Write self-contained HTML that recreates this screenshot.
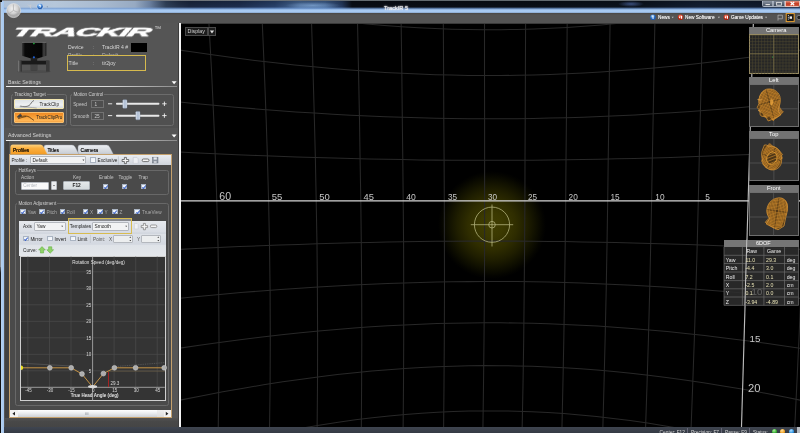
<!DOCTYPE html>
<html><head><meta charset="utf-8"><title>TrackIR 5</title>
<style>
html,body{margin:0;padding:0}
body{width:800px;height:433px;overflow:hidden;background:#555;position:relative;font-family:"Liberation Sans",sans-serif;color:#ddd;font-size:6.5px;line-height:1}
div,span{position:absolute;box-sizing:border-box;white-space:nowrap}
svg{position:absolute;left:0;top:0;overflow:visible}
.t{color:#d8d8d8;font-size:6.4px;line-height:7px}
.dk{color:#222}
.gb{border:1px solid #6c6c6c;border-radius:2.5px}
.gbl{background:#505050;padding:0 1px;color:#d0d0d0;font-size:6.4px;line-height:7px}
.cb{width:5.6px;height:5.6px;background:linear-gradient(135deg,#e8eef6,#ffffff);border:0.6px solid #aab4c2}
.cb.on:after{content:"";position:absolute;left:1.2px;top:0.1px;width:1.4px;height:3px;border:solid #3a62cc;border-width:0 0.75px 0.75px 0;transform:rotate(40deg)}
.combo{background:#f2f3f4;border:0.6px solid #b4b8be;border-radius:1px;color:#222;font-size:6.4px;line-height:7.5px;padding-left:1.5px}
.g{fill:none;stroke:#282828;stroke-width:1.05}
.ax{fill:none;stroke:#d6d6d6;stroke-width:1.3}
.lbl text{fill:#c6c6c6;font-family:"Liberation Sans",sans-serif}
.ph{background:#737373;color:#fff;font-size:7px;line-height:7px;text-align:center}
.pb{background:#303030;border:1px solid #6e6e6e}
.td{color:#e6e0b4;font-size:6.6px;line-height:8px}
.tl{color:#eee;font-size:6.6px;line-height:8px}
</style></head><body><div id="root" style="left:0;top:0;width:800px;height:433px;overflow:hidden;will-change:transform">

<!-- ================= VIEWPORT ================= -->
<div style="left:180px;top:23px;width:620px;height:405px;background:#000;overflow:hidden"></div>
<div style="left:438px;top:171px;width:108px;height:108px;background:radial-gradient(closest-side,rgb(64,62,2) 0%,rgb(59,57,1) 22%,rgb(47,45,0) 45%,rgb(31,30,0) 65%,rgb(14,14,0) 83%,rgb(4,4,0) 94%,rgb(0,0,0) 100%)"></div>
<svg width="800" height="433" viewBox="0 0 800 433" style="clip-path:inset(23px 0 5px 180px)">
<path class="g" d="M811.0 21.0L809.3 70.0L807.5 120.0L806.0 160.0L804.6 201.0L802.9 245.0L801.1 290.0L798.9 340.0L796.8 385.0L794.6 430.0"/>
<path class="g" d="M702.5 21.0L701.4 70.0L700.2 120.0L699.2 160.0L698.3 201.0L697.2 245.0L695.9 290.0L694.3 340.0L692.7 385.0L691.0 430.0"/>
<path class="g" d="M654.9 21.0L654.0 70.0L653.1 120.0L652.3 160.0L651.6 201.0L650.7 245.0L649.7 290.0L648.4 340.0L647.0 385.0L645.5 430.0"/>
<path class="g" d="M610.1 21.0L609.4 70.0L608.8 120.0L608.2 160.0L607.7 201.0L607.0 245.0L606.2 290.0L605.1 340.0L604.0 385.0L602.8 430.0"/>
<path class="g" d="M567.2 21.0L566.8 70.0L566.4 120.0L566.0 160.0L565.7 201.0L565.2 245.0L564.6 290.0L563.8 340.0L562.9 385.0L561.9 430.0"/>
<path class="g" d="M525.6 21.0L525.4 70.0L525.2 120.0L525.0 160.0L524.9 201.0L524.6 245.0L524.2 290.0L523.7 340.0L523.0 385.0L522.1 430.0"/>
<path class="g" d="M484.5 21.0L484.5 70.0L484.6 120.0L484.6 160.0L484.6 201.0L484.6 245.0L484.4 290.0L484.0 340.0L483.5 385.0L482.9 430.0"/>
<path class="g" d="M443.3 21.0L443.6 70.0L443.8 120.0L444.1 160.0L444.3 201.0L444.4 245.0L444.5 290.0L444.3 340.0L444.0 385.0L443.6 430.0"/>
<path class="g" d="M401.1 21.0L401.8 70.0L402.3 120.0L402.8 160.0L403.2 201.0L403.6 245.0L403.7 290.0L403.7 340.0L403.5 385.0L403.1 430.0"/>
<path class="g" d="M357.5 21.0L358.5 70.0L359.5 120.0L360.1 160.0L360.8 201.0L361.3 245.0L361.7 290.0L361.8 340.0L361.6 385.0L361.3 430.0"/>
<path class="g" d="M311.5 21.0L313.0 70.0L314.4 120.0L315.4 160.0L316.2 201.0L317.0 245.0L317.4 290.0L317.6 340.0L317.5 385.0L317.1 430.0"/>
<path class="g" d="M262.2 21.0L264.3 70.0L266.2 120.0L267.5 160.0L268.6 201.0L269.5 245.0L270.1 290.0L270.3 340.0L270.1 385.0L269.5 430.0"/>
<path class="g" d="M208.8 21.0L211.5 70.0L213.8 120.0L215.4 160.0L216.8 201.0L218.0 245.0L218.7 290.0L219.0 340.0L218.8 385.0L218.2 430.0"/>
<path class="g" d="M701.0 486.0L682.3 481.7L664.2 477.8L646.6 474.3L629.3 471.3L612.4 468.6L595.9 466.3L579.5 464.4L563.4 462.7L547.5 461.4L531.7 460.5L516.0 459.8L500.4 459.4L484.8 459.4L469.2 459.7L453.5 460.2L437.7 461.1L421.8 462.3L405.8 463.8L389.6 465.6L373.1 467.8L356.3 470.4L339.2 473.3L321.7 476.6L303.7 480.3L285.2 484.5"/>
<path class="g" d="M855.9 470.4L830.8 463.3L807.0 456.9L784.3 451.0L762.6 445.7L741.8 440.9L721.7 436.5L702.3 432.6L683.5 429.1L665.3 425.9L647.5 423.1L630.1 420.6L613.2 418.4L596.5 416.5L580.0 414.9L563.8 413.6L547.8 412.5L531.9 411.7L516.2 411.2L500.4 410.9L484.7 410.9L469.0 411.1L453.3 411.5L437.4 412.2L421.5 413.2L405.3 414.5L389.0 416.0L372.4 417.8L355.5 419.8L338.3 422.2L320.6 424.9L302.6 428.0L284.0 431.4L264.8 435.2L245.0 439.4L224.4 444.1L203.0 449.2L180.6 454.9L157.2 461.1L132.5 468.0"/>
<path class="g" d="M858.3 412.7L833.1 407.1L809.0 402.0L786.2 397.3L764.3 393.1L743.3 389.3L723.1 385.9L703.5 382.8L684.6 380.0L666.3 377.5L648.4 375.3L630.9 373.3L613.8 371.6L597.0 370.1L580.5 368.8L564.2 367.8L548.1 367.0L532.2 366.3L516.3 365.9L500.5 365.7L484.7 365.6L468.9 365.8L453.1 366.2L437.1 366.7L421.1 367.5L404.9 368.5L388.4 369.7L371.7 371.1L354.8 372.7L337.4 374.6L319.7 376.7L301.5 379.2L282.8 381.8L263.5 384.8L243.5 388.2L222.8 391.8L201.2 395.9L178.6 400.4L155.0 405.3L130.2 410.8"/>
<path class="g" d="M835.2 353.6L811.0 349.8L787.9 346.4L765.9 343.2L744.7 340.4L724.4 337.9L704.7 335.5L685.7 333.5L667.2 331.6L649.2 330.0L631.7 328.5L614.5 327.2L597.6 326.1L581.0 325.2L564.6 324.4L548.4 323.8L532.4 323.3L516.4 323.0L500.5 322.8L484.7 322.8L468.8 322.9L452.9 323.2L436.9 323.6L420.7 324.2L404.4 324.9L387.9 325.8L371.1 326.8L354.1 328.0L336.6 329.4L318.8 331.0L300.5 332.8L281.6 334.8L262.2 337.1L242.1 339.5L221.2 342.3L199.5 345.3L176.7 348.6L152.9 352.3L127.9 356.4"/>
<path class="g" d="M837.3 302.0L812.9 299.5L789.6 297.2L767.4 295.1L746.1 293.2L725.6 291.5L705.8 290.0L686.7 288.6L668.1 287.3L650.0 286.2L632.4 285.3L615.1 284.4L598.1 283.7L581.4 283.1L565.0 282.6L548.7 282.1L532.6 281.8L516.6 281.6L500.6 281.5L484.7 281.5L468.7 281.6L452.7 281.7L436.6 282.0L420.4 282.4L404.0 282.9L387.4 283.5L370.6 284.2L353.4 285.0L335.9 285.9L317.9 287.0L299.5 288.2L280.6 289.5L261.0 291.0L240.8 292.6L219.7 294.4L197.8 296.5L174.9 298.7L150.9 301.1L125.7 303.8"/>
<path class="g" d="M839.3 251.4L814.7 250.1L791.3 248.9L768.9 247.9L747.5 246.9L726.8 246.1L706.9 245.3L687.7 244.6L669.0 244.0L650.8 243.5L633.0 243.0L615.7 242.5L598.6 242.2L581.9 241.9L565.3 241.6L549.0 241.4L532.8 241.2L516.7 241.1L500.6 241.1L484.6 241.1L468.6 241.1L452.5 241.2L436.4 241.3L420.1 241.5L403.6 241.8L386.9 242.1L370.0 242.4L352.7 242.8L335.1 243.3L317.1 243.8L298.5 244.4L279.5 245.1L259.8 245.8L239.4 246.6L218.3 247.6L196.2 248.6L173.2 249.7L149.0 250.9L123.5 252.3"/>
<path class="g" d="M843.3 149.8L818.4 151.1L794.6 152.3L771.9 153.4L750.2 154.4L729.3 155.2L709.1 156.0L689.7 156.7L670.8 157.4L652.4 157.9L634.4 158.4L616.9 158.8L599.7 159.2L582.7 159.5L566.0 159.8L549.5 160.0L533.2 160.2L516.9 160.3L500.7 160.3L484.6 160.3L468.4 160.3L452.2 160.2L435.9 160.1L419.4 159.9L402.8 159.6L386.0 159.3L368.8 159.0L351.4 158.6L333.6 158.1L315.4 157.5L296.6 156.9L277.4 156.3L257.4 155.5L236.8 154.7L215.4 153.7L193.0 152.7L169.6 151.5L145.1 150.3"/>
<path class="g" d="M845.4 97.4L820.2 100.1L796.3 102.5L773.5 104.6L751.6 106.6L730.6 108.4L710.3 110.0L690.7 111.4L671.7 112.7L653.2 113.8L635.1 114.9L617.5 115.7L600.2 116.5L583.2 117.2L566.4 117.7L549.8 118.1L533.4 118.4L517.1 118.7L500.8 118.8L484.6 118.8L468.3 118.7L452.0 118.5L435.6 118.2L419.1 117.8L402.4 117.3L385.5 116.7L368.3 116.0L350.7 115.2L332.8 114.2L314.5 113.1L295.7 111.9L276.3 110.5L256.2 108.9L235.4 107.2L213.9 105.3L191.3 103.2L167.8 100.9L143.0 98.3"/>
<path class="g" d="M847.6 42.7L822.2 46.7L798.1 50.4L775.1 53.8L753.0 56.8L731.9 59.5L711.5 62.0L691.8 64.2L672.6 66.2L654.0 67.9L635.9 69.5L618.1 70.8L600.7 72.0L583.6 73.0L566.8 73.8L550.1 74.5L533.6 75.0L517.2 75.3L500.8 75.5L484.5 75.5L468.2 75.4L451.8 75.1L435.4 74.7L418.7 74.1L402.0 73.3L384.9 72.4L367.6 71.3L350.0 70.0L332.0 68.5L313.6 66.8L294.6 64.9L275.1 62.7L254.9 60.4L234.0 57.7L212.3 54.8L189.6 51.6L165.9 48.0L140.9 44.1"/>
<path class="g" d="M849.9 -15.4L824.3 -9.8L800.0 -4.7L776.8 -0.1L754.6 4.0L733.3 7.8L712.7 11.1L692.9 14.2L673.6 16.9L654.9 19.3L636.7 21.4L618.8 23.3L601.3 24.9L584.1 26.3L567.2 27.4L550.4 28.3L533.8 29.0L517.3 29.4L500.9 29.7L484.5 29.7L468.1 29.6L451.6 29.2L435.1 28.6L418.4 27.7L401.5 26.7L384.4 25.4L367.0 23.9L349.3 22.1L331.2 20.0L312.6 17.7L293.5 15.1L273.9 12.2L253.6 8.9L232.5 5.3L210.6 1.3L187.8 -3.2L163.8 -8.1L138.7 -13.5"/>
<path class="g" d="M674.7 -36.2L655.9 -33.1L637.5 -30.3L619.6 -27.9L602.0 -25.8L584.7 -24.1L567.6 -22.6L550.8 -21.4L534.1 -20.6L517.5 -20.0L501.0 -19.6L484.5 -19.6L468.0 -19.8L451.4 -20.3L434.8 -21.1L418.0 -22.2L401.0 -23.6L383.8 -25.2L366.3 -27.2L348.5 -29.5L330.2 -32.2L311.6 -35.2"/>
<path class="ax" style="stroke:#bcbcbc;stroke-width:1.15" d="M753.4 21L741.4 430"/>
<path class="ax" d="M180 200.9L748.8 200.9"/>
<path class="ax" d="M796 200.9L800 200.9"/>

<g class="lbl">
<text x="219.3" y="199.6" font-size="10.6">60</text>
<text x="271.8" y="199.6" font-size="9.5">55</text>
<text x="319.3" y="199.6" font-size="9.5">50</text>
<text x="363.6" y="199.6" font-size="9.4">45</text>
<text x="406.2" y="199.6" font-size="8.6">40</text>
<text x="447.9" y="199.6" font-size="8.2">35</text>
<text x="487.9" y="199.6" font-size="8.2">30</text>
<text x="527.9" y="199.6" font-size="8.2">25</text>
<text x="568.6" y="199.6" font-size="8.3">20</text>
<text x="610.4" y="199.6" font-size="8.3">15</text>
<text x="655.3" y="199.6" font-size="8.3">10</text>
<text x="705.3" y="199.6" font-size="8.3">5</text>
<text x="751.6" y="295.2" font-size="9.6">10</text>
<text x="749.6" y="342.2" font-size="9.8">15</text>
<text x="748.0" y="392.0" font-size="11.2">20</text>

</g>
<g fill="none" stroke="#b9b984" stroke-width="0.75">
<circle cx="492" cy="224.7" r="17.6"/><circle cx="492" cy="224.7" r="3.3"/>
<path d="M470.8 224.7H513.2M492 204.5V246.5"/>
</g>
</svg>
<!-- display button -->
<div style="left:185px;top:27.4px;width:23px;height:8.8px;background:#1c1c1c;border:0.6px solid #4a4a4a;color:#d4d4d4;font-size:5.3px;line-height:7.6px;padding-left:1.6px">Display</div>
<div style="left:207.6px;top:27.4px;width:8.8px;height:8.8px;background:#1c1c1c;border:0.6px solid #4a4a4a"></div>
<svg width="800" height="433"><path d="M209.9 30.4h4.2l-2.1 3z" fill="#e0e0e0"/></svg>

<!-- ================= TITLE BAR ================= -->
<div style="left:0;top:0;width:800px;height:13px;background:linear-gradient(90deg,#aec0d5 0,#b6c7da 55px,#a9bbd0 100px,#97aac2 135px,#6a7f9e 150px,#33455f 166px,#1f2e4a 190px,#22355a 240px,#2f4b7a 275px,#5379ad 300px,#4a70a6 325px,#2a426c 342px,#0b1019 352px,#0b111a 520px,#0d1622 640px,#16243b 700px,#121d30 800px)"></div>
<div style="left:0;top:1px;width:800px;height:8px;background:linear-gradient(180deg,rgba(0,0,0,0.3),rgba(0,0,0,0.05));-webkit-mask-image:linear-gradient(90deg,transparent 150px,#000 180px);mask-image:linear-gradient(90deg,transparent 150px,#000 180px)"></div>
<div style="left:618px;top:0.5px;width:26px;height:6px;background:radial-gradient(closest-side,rgba(90,120,190,0.6),rgba(90,120,190,0));"></div>
<div style="left:285px;top:1.5px;width:56px;height:7px;background:radial-gradient(closest-side,rgba(150,190,235,0.55),rgba(150,190,235,0));"></div>
<div style="left:0;top:7.4px;width:800px;height:5.6px;background:linear-gradient(180deg,rgba(120,160,215,0) 0,rgba(120,160,215,0.75) 25%,#9fc2ec 45%,#abcdf5 65%,#a3c5ee 85%,#7f9cc0 100%)"></div>
<div style="left:0;top:0;width:800px;height:1.1px;background:linear-gradient(90deg,#8a8e94,#70767c 200px,#626a70 400px,#626a70)"></div>
<div style="left:384px;top:4.6px;font-size:5.6px;line-height:6px;color:#f2f2f2;text-shadow:0 0 1.5px #fff,0 0 2px #ccd">TrackIR 5</div>
<!-- window buttons -->
<div style="left:762.4px;top:0.6px;width:10.6px;height:6px;background:linear-gradient(#8a94a2,#4a5464);border:0.6px solid rgba(200,208,220,0.6);border-top:0;border-radius:0 0 0 2px"></div>
<div style="left:773px;top:0.6px;width:12.4px;height:6px;background:linear-gradient(#7a8494,#3e4858);border:0.6px solid rgba(200,208,220,0.6);border-top:0"></div>
<div style="left:785.4px;top:0.6px;width:14.6px;height:6px;background:linear-gradient(#e0907c,#c43a22 55%,#d0563c);border:0.6px solid #e8c0b8;border-top:0;border-radius:0 0 2px 0"></div>
<svg width="800" height="433"><path d="M765.5 4.6h4.4" stroke="#e4e4e4" stroke-width="1.1"/><rect x="776.6" y="2.4" width="4.8" height="2.8" fill="none" stroke="#e0e0e0" stroke-width="0.9"/><path d="M790.6 2l3.6 3.2m0-3.2l-3.6 3.2" stroke="#fff" stroke-width="1.2"/></svg>

<!-- ================= TOOLBAR ================= -->
<div style="left:4px;top:12.9px;width:796px;height:10.1px;background:linear-gradient(#4a4846,#545454 2px,#545454)"></div>
<div style="left:178px;top:22.5px;width:622px;height:1px;background:#3a3a3a"></div>
<svg width="800" height="433">
<defs><radialGradient id="bl" cx="40%" cy="30%"><stop offset="0" stop-color="#cfe6ff"/><stop offset="0.6" stop-color="#3f86d8"/><stop offset="1" stop-color="#1f5cb0"/></radialGradient>
<radialGradient id="rd" cx="40%" cy="30%"><stop offset="0" stop-color="#ff9a80"/><stop offset="0.6" stop-color="#d83a20"/><stop offset="1" stop-color="#a82410"/></radialGradient></defs>
<circle cx="653" cy="17.3" r="2.8" fill="url(#bl)"/><rect x="652.6" y="15.4" width="0.9" height="3.6" fill="#fff"/>
<circle cx="680.6" cy="17.3" r="2.8" fill="url(#rd)"/><path d="M678.8 17.3l1.4-1.4v2.8zM681 15.8h1.2v3h-1.2z" fill="#fff"/>
<circle cx="726.4" cy="17.3" r="2.8" fill="url(#rd)"/><path d="M724.6 17.3l1.4-1.4v2.8zM726.8 15.8h1.2v3h-1.2z" fill="#fff"/>
<path d="M671.6 16.8h2.2l-1.1 1.4zM717.8 16.8h2.2l-1.1 1.4zM765 16.8h2.2l-1.1 1.4z" fill="#bbb"/>
<path d="M778 15v5.6M778 15.2h4.4v3.6h-4.4" fill="none" stroke="#aaa" stroke-width="0.8"/>
<rect x="786.2" y="13.6" width="8" height="8" fill="#1c1c1c" stroke="#e8a030" stroke-width="1"/>
<path d="M788.4 15v5.4" stroke="#ddd" stroke-width="0.9" stroke-dasharray="1 0.8"/><rect x="789.6" y="16.4" width="2.4" height="2.4" fill="#eee"/>
<circle cx="799" cy="17.5" r="2.2" fill="#222" stroke="#999" stroke-width="0.7"/>
</svg>
<div class="tb" style="left:658px;top:14.6px;font-size:4.75px;line-height:6px;color:#e8e8e8;text-shadow:0 0 0.5px #e8e8e8">News</div>
<div class="tb" style="left:685px;top:14.6px;font-size:4.75px;line-height:6px;color:#e8e8e8;text-shadow:0 0 0.5px #e8e8e8">New Software</div>
<div class="tb" style="left:731px;top:14.6px;font-size:4.75px;line-height:6px;color:#e8e8e8;text-shadow:0 0 0.5px #e8e8e8">Game Updates</div>

<!-- ================= LEFT PANEL ================= -->
<div style="left:4px;top:23px;width:175px;height:404px;background:#555"></div>
<!-- logo -->
<div style="left:15.6px;top:24.5px;font-size:12.3px;line-height:15px;font-weight:bold;font-style:italic;color:#fff;letter-spacing:-0.45px;-webkit-text-stroke:0.6px #fff;transform-origin:0 0;transform:scaleX(2.62) skewX(-8deg);will-change:transform">TRACKIR</div>
<div style="left:154.3px;top:26.4px;font-size:7px;line-height:7px;color:#ccc;margin-top:-1.4px">™</div>
<!-- device picture -->
<svg width="800" height="433">
<defs><linearGradient id="cam" x1="0" x2="1"><stop offset="0" stop-color="#3a3a3a"/><stop offset="0.12" stop-color="#0a0a0a"/><stop offset="0.8" stop-color="#050505"/><stop offset="0.9" stop-color="#444"/><stop offset="1" stop-color="#1a1a1a"/></linearGradient>
<linearGradient id="leg" x1="0" x2="1"><stop offset="0" stop-color="#8a8a8a"/><stop offset="0.3" stop-color="#555"/><stop offset="1" stop-color="#2a2a2a"/></linearGradient></defs>
<ellipse cx="34" cy="71.6" rx="17" ry="1.6" fill="#4c4c4c"/>
<path d="M22 42.6h24.4v13.2l-9 2.6h-6.2l-9.2-2.6z" fill="url(#cam)"/>
<path d="M22 42.4h24.4" stroke="#777" stroke-width="0.7"/>
<rect x="30.8" y="57.6" width="6.4" height="12.6" fill="#1e1e1e"/>
<path d="M19.2 60.8h29.6v3.6h-29.6z" fill="#1a1a1a"/>
<path d="M18.4 60.6h3.4v11h-3.4z" fill="url(#leg)"/><path d="M46 60.6h3.6v11h-3.6z" fill="#3a3a3a"/>
<path d="M31 64.4h6v5.8h-6z" fill="#444"/>
<circle cx="33.9" cy="43.6" r="0.8" fill="#20c040"/><circle cx="33.9" cy="57.3" r="1.1" fill="#2060d0"/>
</svg>
<!-- device info -->
<div class="t" style="left:68px;top:43.7px;font-size:5.1px">Device</div><div class="t" style="left:92.6px;top:43.7px;font-size:5.1px;color:#aaa">:</div><div class="t" style="left:102px;top:43.7px;font-size:5.1px">TrackIR 4 #</div>
<div style="left:131px;top:43px;width:16px;height:9px;background:#000"></div>
<div class="t" style="left:68px;top:51.6px;font-size:5.1px;color:#b8b8b8">Profile</div><div class="t" style="left:92.6px;top:51.6px;font-size:5.1px;color:#999">:</div><div class="t" style="left:102px;top:51.6px;font-size:5.1px;color:#b8b8b8">Default</div>
<div style="left:67px;top:55.2px;width:78.6px;height:16px;background:#555;border:1px solid #d6ba4e"></div>
<div class="t" style="left:68.6px;top:60px;font-size:5.1px">Title</div><div class="t" style="left:92.6px;top:60px;font-size:5.1px;color:#aaa">:</div><div class="t" style="left:102px;top:60px;font-size:5.1px">tir2joy</div>
<!-- Basic settings header -->
<div class="t" style="left:8px;top:78.5px;font-size:5.2px;color:#d4d4d4">Basic Settings</div>
<svg width="800" height="433"><path d="M171.6 81.2h5l-2.5 3z" fill="#fff"/></svg>
<div style="left:6px;top:86px;width:171px;height:1.2px;background:linear-gradient(90deg,#f0f0f0,#d8d8d8 60%,#8a8a8a)"></div>
<div style="left:5px;top:87.2px;width:173px;height:41px;background:#505050"></div>
<!-- Tracking target -->
<div class="gb" style="left:11px;top:94px;width:55.6px;height:31.6px"></div>
<div class="gbl" style="left:13.4px;top:90.6px;font-size:4.6px">Tracking Target</div>
<div style="left:14px;top:98.8px;width:50.4px;height:10.6px;background:linear-gradient(#dfe3e6,#eef0f1 60%,#d8dcdf);border:0.8px solid #f3e6b0;border-radius:1px"></div>
<div style="left:14px;top:111.8px;width:50.4px;height:10.8px;background:linear-gradient(#ee8a24,#f7a038 45%,#ffb656 85%,#f4a040);border:0.8px solid #f8c070;border-radius:1px"></div>
<svg width="800" height="433"><g fill="none" stroke-linecap="round">
<path d="M20.6 106.2c3 0.6 6 0.8 8.4-0.6c2-1.2 2.4-4.2 4.6-5" stroke="#555" stroke-width="0.8"/>
<path d="M20 106.8c4 0.2 11 0.4 16.4 1.2" stroke="#999" stroke-width="0.7"/>
<path d="M17.4 116.6l3-2.6 1.4 1.4-3 2.6z" fill="#444" stroke="#333" stroke-width="0.5"/>
<path d="M20.6 116.8c3-1 6-1.2 8.6 0.2c1.6 0.9 3 2.4 4.4 3.2" stroke="#4a3010" stroke-width="0.8"/>
<path d="M18.6 118.6c2-0.6 4.6-1.6 7-2" stroke="#4a3010" stroke-width="0.7"/>
</g></svg>
<div class="t dk" style="left:39.4px;top:100.6px;font-size:4.7px">TrackClip</div>
<div class="t dk" style="left:36.2px;top:113.8px;font-size:4.55px">TrackClipPro</div>
<!-- Motion control -->
<div class="gb" style="left:70px;top:94px;width:103.6px;height:31.6px"></div>
<div class="gbl" style="left:72.4px;top:90.6px;font-size:4.6px">Motion Control</div>
<div class="t" style="left:73.2px;top:100.8px;font-size:4.7px;color:#c8c8c8">Speed</div>
<div class="t" style="left:73.2px;top:112.6px;font-size:4.7px;color:#c8c8c8">Smooth</div>
<div style="left:91px;top:100px;width:13px;height:8.2px;border:0.7px solid #727272;background:#4e4e4e;color:#ccc;font-size:4.7px;line-height:7px;padding-left:2.4px">1</div>
<div style="left:91px;top:111.8px;width:13px;height:8.2px;border:0.7px solid #727272;background:#4e4e4e;color:#ccc;font-size:4.7px;line-height:7px;padding-left:2.4px">25</div>
<svg width="800" height="433">
<defs><linearGradient id="thumb" x1="0" x2="1"><stop offset="0" stop-color="#e8eef6"/><stop offset="0.5" stop-color="#a8b8d0"/><stop offset="1" stop-color="#dfe6f0"/></linearGradient></defs>
<path d="M108 103.8h4.2M108 115.6h4.2M162.2 103.8h4.4M164.4 101.6v4.4M162.2 115.6h4.4M164.4 113.4v4.4" stroke="#f0f0f0" stroke-width="0.9"/>
<rect x="116" y="102.8" width="43.4" height="1.9" rx="0.8" fill="#e8e8e8"/><rect x="116" y="114.8" width="43.4" height="1.9" rx="0.8" fill="#e8e8e8"/>
<rect x="122.8" y="99.8" width="4.2" height="8.4" rx="0.8" fill="url(#thumb)" stroke="#8898b0" stroke-width="0.4"/>
<rect x="135.8" y="111.4" width="4.2" height="8.4" rx="0.8" fill="url(#thumb)" stroke="#8898b0" stroke-width="0.4"/>
</svg>
<!-- Advanced settings header -->
<div style="left:5px;top:128.2px;width:173px;height:12px;background:#555"></div>
<div class="t" style="left:8px;top:132.2px;font-size:5.2px;color:#d4d4d4">Advanced Settings</div>
<svg width="800" height="433"><path d="M171.6 134.6h5l-2.5 3z" fill="#fff"/></svg>
<div style="left:6px;top:139.8px;width:171px;height:1.2px;background:linear-gradient(90deg,#f0f0f0,#d8d8d8 60%,#8a8a8a)"></div>
<div style="left:5px;top:141px;width:173px;height:286px;background:#555"></div>
<div style="left:5px;top:141px;width:4.4px;height:286px;background:#414141"></div>
<!-- tabs -->
<svg width="800" height="433">
<defs>
<linearGradient id="tabo" x1="0" y1="0" x2="0" y2="1"><stop offset="0" stop-color="#ffd27a"/><stop offset="0.35" stop-color="#fbb040"/><stop offset="1" stop-color="#f39a22"/></linearGradient>
<linearGradient id="tabg" x1="0" y1="0" x2="0" y2="1"><stop offset="0" stop-color="#eceef1"/><stop offset="1" stop-color="#c6cbd2"/></linearGradient>
</defs>
<path d="M78 154.4v-7.4q0-2 2-2h26.5q2.2 0 3.4 2.4l3.6 7z" fill="url(#tabg)" stroke="#9aa0a8" stroke-width="0.4"/>
<path d="M44 154.4v-7.4q0-2 2-2h26q2.2 0 3.4 2.4l3.6 7z" fill="url(#tabg)" stroke="#9aa0a8" stroke-width="0.4"/>
<path d="M10.6 154.6v-7.6q0-2.2 2-2.2h27.6q2.2 0 3.4 2.4l3.8 7.4z" fill="url(#tabo)" stroke="#f8c878" stroke-width="0.4"/>
</svg>
<div class="t dk" style="left:13px;top:147px;font-size:4.9px;color:#1a1004;text-shadow:0 0 0.3px #1a1004">Profiles</div>
<div class="t dk" style="left:47.4px;top:147px;font-size:4.9px;color:#181818;text-shadow:0 0 0.3px #181818">Titles</div>
<div class="t dk" style="left:80.6px;top:147px;font-size:4.9px;color:#181818;text-shadow:0 0 0.3px #181818">Camera</div>
<!-- tab page frame -->
<div style="left:9.4px;top:154.2px;width:162.4px;height:263.6px;border:0.8px solid #c4a06c;background:#4a4a4a"></div>
<!-- profile toolbar -->
<div style="left:10.2px;top:155px;width:160.8px;height:10.4px;background:linear-gradient(#e9ecf0,#dde1e7 50%,#cfd4dc)"></div>
<div class="t dk" style="left:11.4px;top:157px;font-size:4.7px">Profile :</div>
<div class="combo" style="left:30px;top:156px;width:56.4px;height:8.4px;font-size:4.8px;line-height:7px">Default</div>
<div class="cb" style="left:90px;top:157.2px"></div>
<div class="t dk" style="left:97.6px;top:157px;font-size:4.7px">Exclusive</div>
<svg width="800" height="433">
<path d="M82.4 159.6h2l-1 1.3z" fill="#444"/>
<path d="M118.4 156.4v8" stroke="#b4bac4" stroke-width="0.6"/>
<path d="M124.4 157.4h2v2.1h2.3v2h-2.3v2.1h-2v-2.1h-2.3v-2h2.3z" fill="#f4f4f4" stroke="#444" stroke-width="0.7"/>
<path d="M133.2 157.4h3.6l1.4 1.4v4.6h-5z" fill="#eceef2" stroke="#c2c6ce" stroke-width="0.6"/>
<rect x="142.2" y="159" width="6.8" height="2.6" rx="1.2" fill="#f4f4f4" stroke="#444" stroke-width="0.7"/>
<rect x="152.4" y="157.2" width="5.6" height="5.8" fill="#8a929e" stroke="#6a727e" stroke-width="0.5"/><rect x="153.6" y="157.4" width="3.2" height="2.2" fill="#e8eaee"/><rect x="153.8" y="161" width="2.8" height="2" fill="#c8ccd4"/>
</svg>
<!-- HotKeys group -->
<div class="gb" style="left:14.6px;top:169.8px;width:154.8px;height:25.6px;border-color:#686868"></div>
<div class="gbl" style="left:17.4px;top:166.7px;font-size:4.6px;background:#4a4a4a">HotKeys</div>
<div class="t" style="left:21px;top:173.8px;font-size:4.7px;color:#c4c4c4">Action</div>
<div class="t" style="left:73px;top:173.8px;font-size:4.7px;color:#c4c4c4">Key</div>
<div class="t" style="left:99px;top:173.8px;font-size:4.7px;color:#c4c4c4">Enable</div>
<div class="t" style="left:118.4px;top:173.8px;font-size:4.7px;color:#c4c4c4">Toggle</div>
<div class="t" style="left:138.4px;top:173.8px;font-size:4.7px;color:#c4c4c4">Trap</div>
<div class="combo" style="left:20.8px;top:181.6px;width:28.4px;height:8px;font-size:4.6px;line-height:6.6px;color:#b4b8be;background:#fafafa">Center</div>
<div class="combo" style="left:50.6px;top:181.2px;width:6.8px;height:8.8px;background:#eceef0"></div>
<div style="left:63px;top:181px;width:27.2px;height:9.2px;background:linear-gradient(#e4e8ea,#d4dadd);border:0.6px solid #aab0b6;border-radius:1px;color:#222;font-size:4.8px;line-height:8px;text-align:center;font-weight:bold">F12</div>
<svg width="800" height="433"><path d="M53 185h2l-1 1.3z" fill="#555"/></svg>
<div class="cb on" style="left:102.8px;top:183.6px"></div>
<div class="cb on" style="left:121.6px;top:183.6px"></div>
<div class="cb on" style="left:140.6px;top:183.6px"></div>
<!-- Motion adjustment group -->
<div class="gb" style="left:14.6px;top:203.2px;width:154.8px;height:202.6px;border-color:#686868"></div>
<div class="gbl" style="left:17.4px;top:199.8px;font-size:4.6px;background:#4a4a4a">Motion Adjustment</div>
<div class="cb on" style="left:20px;top:208.8px"></div><div class="t" style="left:27.4px;top:208.8px;font-size:4.7px;color:#ababab">Yaw</div>
<div class="cb on" style="left:39px;top:208.8px"></div><div class="t" style="left:46.4px;top:208.8px;font-size:4.7px;color:#ababab">Pitch</div>
<div class="cb on" style="left:59.8px;top:208.8px"></div><div class="t" style="left:66.6px;top:208.8px;font-size:4.7px;color:#ababab">Roll</div>
<div class="cb on" style="left:82.8px;top:208.8px"></div><div class="t" style="left:90px;top:208.8px;font-size:4.7px;color:#ababab">X</div>
<div class="cb on" style="left:97.4px;top:208.8px"></div><div class="t" style="left:104.4px;top:208.8px;font-size:4.7px;color:#ababab">Y</div>
<div class="cb on" style="left:112.2px;top:208.8px"></div><div class="t" style="left:119.4px;top:208.8px;font-size:4.7px;color:#ababab">Z</div>
<div class="cb on" style="left:134.4px;top:208.8px"></div><div class="t" style="left:142px;top:208.8px;font-size:4.7px;color:#ababab">TrueView</div>
<!-- axis toolbar -->
<div style="left:19.2px;top:220.6px;width:147px;height:35px;background:linear-gradient(#e6e9ed 0,#d9dde4 11px,#cdd3db 12.2px,#dde1e7 13.2px,#d3d8e0 23.2px,#dfe3e8 24.4px,#e4e7eb 100%)"></div>
<div class="t dk" style="left:23px;top:223.4px;font-size:4.7px">Axis</div>
<div class="combo" style="left:34px;top:221.8px;width:31.6px;height:9.4px;font-size:4.8px;line-height:8px">Yaw</div>
<div style="left:67.8px;top:218.2px;width:64.6px;height:15.4px;border:1px solid #d8bc50;background:rgba(214,220,230,0.45)"></div>
<div class="t dk" style="left:69.8px;top:223.4px;font-size:4.7px">Templates</div>
<div class="combo" style="left:92px;top:221.8px;width:37.4px;height:9.4px;font-size:4.8px;line-height:8px">Smooth</div>
<svg width="800" height="433">
<path d="M61.2 225.8h2l-1 1.3zM125.2 225.8h2l-1 1.3z" fill="#444"/>
<path d="M134.4 223.4h2.6l1.2 1.2v4.4h-3.8z" fill="#f0f2f5" stroke="#c8ccd4" stroke-width="0.6"/>
<path d="M143.4 223.4h2v2.2h2.2v2h-2.2v2.2h-2v-2.2h-2.2v-2h2.2z" fill="#f4f4f4" stroke="#777" stroke-width="0.7"/>
<rect x="150.4" y="225" width="6.4" height="2.6" rx="1.2" fill="#f4f4f4" stroke="#777" stroke-width="0.7"/>
<path d="M90.4 234.8v8" stroke="#b8bec8" stroke-width="0.6"/>
</svg>
<div class="cb on" style="left:23px;top:235.8px"></div><div class="t dk" style="left:30.4px;top:235.8px;font-size:4.7px">Mirror</div>
<div class="cb" style="left:47px;top:235.8px"></div><div class="t dk" style="left:54.4px;top:235.8px;font-size:4.7px">Invert</div>
<div class="cb" style="left:70px;top:235.8px"></div><div class="t dk" style="left:77.4px;top:235.8px;font-size:4.7px">Limit</div>
<div class="t dk" style="left:93px;top:235.8px;font-size:4.7px;color:#555">Point:</div>
<div class="t dk" style="left:109px;top:235.8px;font-size:4.7px;color:#555">X</div>
<div class="t dk" style="left:137px;top:235.8px;font-size:4.7px;color:#555">Y</div>
<div class="combo" style="left:113px;top:234.6px;width:20.4px;height:8.8px;background:#eceeef"></div>
<div class="combo" style="left:141px;top:234.6px;width:20.4px;height:8.8px;background:#eceeef"></div>
<svg width="800" height="433"><path d="M129.4 237.8h1.8l-0.9-1.2zM129.4 240h1.8l-0.9 1.2zM157.4 237.8h1.8l-0.9-1.2zM157.4 240h1.8l-0.9 1.2z" fill="#333"/>
<path d="M42 246.6l3.4 3.4h-1.8v3h-3.2v-3h-1.8z" fill="#8fd268" stroke="#58a838" stroke-width="0.5"/>
<path d="M50.2 253.2l3.4-3.4h-1.8v-3h-3.2v3h-1.8z" fill="#8fd268" stroke="#58a838" stroke-width="0.5"/></svg>
<div class="t dk" style="left:23px;top:246.8px;font-size:4.7px">Curve:</div>
<div style="left:20.0px;top:255.6px;width:145.8px;height:145.8px;background:#343434;border:0.9px solid #cfcfcf"></div>
<svg width="800" height="433"><g stroke="#4c4c4c" stroke-width="0.7" fill="none"><path d="M27.9 256.6V392.5"/><path d="M49.5 256.6V392.5"/><path d="M71.0 256.6V392.5"/><path d="M114.1 256.6V392.5"/><path d="M135.7 256.6V392.5"/><path d="M157.2 256.6V392.5"/><path d="M21.0 370.8H164.8"/><path d="M21.0 354.3H164.8"/><path d="M21.0 337.8H164.8"/><path d="M21.0 321.3H164.8"/><path d="M21.0 304.8H164.8"/><path d="M21.0 288.3H164.8"/><path d="M21.0 271.8H164.8"/></g><path d="M92.6 256.6V400.4M21.0 387.3H164.8" stroke="#b4b4b4" stroke-width="0.8" fill="none"/><path d="M21 363.2L71.5 366" stroke="#6a6a6a" stroke-width="0.5" fill="none"/><path d="M114.5 366.6L165 362.6" stroke="#777" stroke-width="0.5" stroke-dasharray="1 0.8" fill="none"/><path d="M108.5 371.2H165" stroke="#7a6a4a" stroke-width="0.5" fill="none"/><path d="M21.0 367.8L71.2 367.8L82.0 374.0L92.6 387.0L103.4 373.6L114.4 367.8L165.0 367.8" stroke="#cc9846" stroke-width="0.95" fill="none" stroke-linejoin="round"/><path d="M108.5 372V387" stroke="#c02020" stroke-width="0.8"/><circle cx="49.8" cy="367.8" r="2.4" fill="#adadad" stroke="#cdcdcd" stroke-width="0.6"/><circle cx="71.2" cy="367.8" r="2.4" fill="#adadad" stroke="#cdcdcd" stroke-width="0.6"/><circle cx="82.0" cy="374.0" r="2.4" fill="#adadad" stroke="#cdcdcd" stroke-width="0.6"/><circle cx="103.4" cy="373.6" r="2.4" fill="#adadad" stroke="#cdcdcd" stroke-width="0.6"/><circle cx="114.4" cy="367.8" r="2.4" fill="#adadad" stroke="#cdcdcd" stroke-width="0.6"/><circle cx="135.6" cy="367.8" r="2.4" fill="#adadad" stroke="#cdcdcd" stroke-width="0.6"/><circle cx="164.2" cy="367.8" r="2.4" fill="#adadad" stroke="#cdcdcd" stroke-width="0.6"/><ellipse cx="92.6" cy="386.6" rx="4.6" ry="1.6" fill="#d8d8d8"/><path d="M21 365.6a2.2 2.2 0 0 1 0 4.4z" fill="#e8e020"/></svg>
<div style="top:260.2px;font-size:4.6px;line-height:5px;color:#e0e0e0;left:38.6px;width:120px;text-align:center;">Rotation Speed (deg/deg)</div>
<div style="top:368.8px;font-size:4.5px;line-height:5px;color:#d6d6d6;left:51.2px;width:40px;text-align:right;">5</div>
<div style="top:352.3px;font-size:4.5px;line-height:5px;color:#d6d6d6;left:51.2px;width:40px;text-align:right;">10</div>
<div style="top:335.8px;font-size:4.5px;line-height:5px;color:#d6d6d6;left:51.2px;width:40px;text-align:right;">15</div>
<div style="top:319.3px;font-size:4.5px;line-height:5px;color:#d6d6d6;left:51.2px;width:40px;text-align:right;">20</div>
<div style="top:302.8px;font-size:4.5px;line-height:5px;color:#d6d6d6;left:51.2px;width:40px;text-align:right;">25</div>
<div style="top:286.3px;font-size:4.5px;line-height:5px;color:#d6d6d6;left:51.2px;width:40px;text-align:right;">30</div>
<div style="top:269.8px;font-size:4.5px;line-height:5px;color:#d6d6d6;left:51.2px;width:40px;text-align:right;">35</div>
<div style="top:387.6px;font-size:4.5px;line-height:5px;color:#d6d6d6;left:-31.5px;width:120px;text-align:center;">-45</div>
<div style="top:387.6px;font-size:4.5px;line-height:5px;color:#d6d6d6;left:-9.9px;width:120px;text-align:center;">-30</div>
<div style="top:387.6px;font-size:4.5px;line-height:5px;color:#d6d6d6;left:11.6px;width:120px;text-align:center;">-15</div>
<div style="top:387.6px;font-size:4.5px;line-height:5px;color:#d6d6d6;left:33.2px;width:120px;text-align:center;">0</div>
<div style="top:387.6px;font-size:4.5px;line-height:5px;color:#d6d6d6;left:54.7px;width:120px;text-align:center;">15</div>
<div style="top:387.6px;font-size:4.5px;line-height:5px;color:#d6d6d6;left:76.3px;width:120px;text-align:center;">30</div>
<div style="top:387.6px;font-size:4.5px;line-height:5px;color:#d6d6d6;left:97.8px;width:120px;text-align:center;">45</div>
<div style="top:393.0px;font-size:4.5px;line-height:5px;color:#e4e4e4;font-weight:bold;left:34.6px;width:120px;text-align:center;">True Head Angle (deg)</div>
<div style="top:380.6px;font-size:4.6px;line-height:5px;color:#d8d8d8;left:110.4px;">29.3</div>

<!-- scrollbar -->
<div style="left:10.2px;top:410px;width:160.8px;height:7.4px;background:#f2f2f2"></div>
<div style="left:18px;top:410px;width:138.6px;height:7.4px;background:linear-gradient(#ffffff,#eceef0 45%,#cdd1d6)"></div>
<div style="left:156.6px;top:410px;width:7.4px;height:7.4px;background:linear-gradient(#f0f0f0,#dcdcdc)"></div>
<svg width="800" height="433"><path d="M15 411.8v3.8l-2.6-1.9zM165.8 411.8v3.8l2.6-1.9z" fill="#222"/><path d="M85.6 412.4v2.6M86.8 412.4v2.6M88 412.4v2.6" stroke="#8a9098" stroke-width="0.5"/></svg>
<div style="left:5px;top:418px;width:173px;height:9px;background:linear-gradient(#525252,#484848 40%,#454545)"></div>
<div style="left:178.2px;top:23px;width:0.8px;height:404px;background:#3c3c3c"></div>
<div style="left:179px;top:23px;width:1.9px;height:404px;background:#f4f4f4"></div>


<!-- ================= RIGHT PANELS ================= -->
<div class="ph" style="left:749.0px;top:27.4px;width:49.6px;height:6.8px;font-size:5.8px;line-height:6.8px;padding-left:4.8px">Camera</div>
<div style="left:749.0px;top:34.2px;width:49.6px;height:40.2px;background:#262626;border:0.8px solid #968a62"></div>
<svg width="800" height="433"><g stroke="#4e4830" stroke-width="0.5"><path d="M752.45 35V74"/><path d="M755.50 35V74"/><path d="M758.55 35V74"/><path d="M761.60 35V74"/><path d="M764.65 35V74"/><path d="M767.70 35V74"/><path d="M770.75 35V74"/><path d="M776.85 35V74"/><path d="M779.90 35V74"/><path d="M782.95 35V74"/><path d="M786.00 35V74"/><path d="M789.05 35V74"/><path d="M792.10 35V74"/><path d="M795.15 35V74"/><path d="M749.6 35.50H798"/><path d="M749.6 38.55H798"/><path d="M749.6 41.60H798"/><path d="M749.6 44.65H798"/><path d="M749.6 47.70H798"/><path d="M749.6 50.75H798"/><path d="M749.6 56.85H798"/><path d="M749.6 59.90H798"/><path d="M749.6 62.95H798"/><path d="M749.6 66.00H798"/><path d="M749.6 69.05H798"/><path d="M749.6 72.10H798"/></g><path d="M773.8 35V74M749.6 53.8H798" stroke="#7c7048" stroke-width="0.9"/><circle cx="772.6" cy="57" r="0.5" fill="#30c050"/></svg>
<div class="ph" style="left:749.0px;top:77.0px;width:49.6px;height:6.8px;font-size:5.8px;line-height:6.8px">Left</div>
<div class="pb" style="left:749.0px;top:83.8px;width:49.6px;height:42.8px"></div>
<svg width="800" height="433"><path d="M773.8 84.8V125.6M750.0 108.8H797.6" stroke="#5a5a5a" stroke-width="0.7" fill="none"/></svg>
<div class="ph" style="left:749.0px;top:131.2px;width:49.6px;height:6.8px;font-size:5.8px;line-height:6.8px">Top</div>
<div class="pb" style="left:749.0px;top:138.0px;width:49.6px;height:43.4px"></div>
<svg width="800" height="433"><path d="M773.9 139.0V180.4M750.0 163.0H797.6" stroke="#5a5a5a" stroke-width="0.7" fill="none"/></svg>
<div class="ph" style="left:749.0px;top:185.3px;width:49.6px;height:6.8px;font-size:5.8px;line-height:6.8px">Front</div>
<div class="pb" style="left:749.0px;top:192.2px;width:49.6px;height:44.2px"></div>
<svg width="800" height="433"><path d="M773.6 193.2V235.4M750.0 217.0H797.6" stroke="#5a5a5a" stroke-width="0.7" fill="none"/></svg>
<svg width="800" height="433"><clipPath id="hl"><path d="M766.5 89.2c5.5-1.2 11.5 1.4 13.3 7c1.2 4 0.4 8.6-1.4 11.6c-0.6 2.4 0.8 5.2 2.4 7.2c-3.4 2.4-8.8 4.6-12.6 6l-2.8-4.8c-1.6 0.5-3.4 0.4-4.6-0.5c-1-1-0.7-2.6-0.9-3.8c-0.4-1.1-1-1.6-0.8-2.6c-0.9-0.5-2-1.2-1.8-2c0.3-1.2 1.6-2.6 1.7-4c-0.3-2-0.2-4.2 0.5-6c1.2-3.8 3.8-7 7-8.1z"/></clipPath><path d="M766.5 89.2c5.5-1.2 11.5 1.4 13.3 7c1.2 4 0.4 8.6-1.4 11.6c-0.6 2.4 0.8 5.2 2.4 7.2c-3.4 2.4-8.8 4.6-12.6 6l-2.8-4.8c-1.6 0.5-3.4 0.4-4.6-0.5c-1-1-0.7-2.6-0.9-3.8c-0.4-1.1-1-1.6-0.8-2.6c-0.9-0.5-2-1.2-1.8-2c0.3-1.2 1.6-2.6 1.7-4c-0.3-2-0.2-4.2 0.5-6c1.2-3.8 3.8-7 7-8.1z" fill="#543a18"/><g clip-path="url(#hl)" fill="none" stroke="#d8902e" stroke-width="0.48" transform="rotate(-15 769.5 102)"><ellipse cx="769.5" cy="102" rx="1.5" ry="19.5"/><ellipse cx="769.5" cy="102" rx="18.0" ry="1.5"/><ellipse cx="769.5" cy="102" rx="3.0" ry="19.5"/><ellipse cx="769.5" cy="102" rx="18.0" ry="3.0"/><ellipse cx="769.5" cy="102" rx="4.5" ry="19.5"/><ellipse cx="769.5" cy="102" rx="18.0" ry="4.5"/><ellipse cx="769.5" cy="102" rx="6.0" ry="19.5"/><ellipse cx="769.5" cy="102" rx="18.0" ry="6.0"/><ellipse cx="769.5" cy="102" rx="7.5" ry="19.5"/><ellipse cx="769.5" cy="102" rx="18.0" ry="7.5"/><ellipse cx="769.5" cy="102" rx="9.0" ry="19.5"/><ellipse cx="769.5" cy="102" rx="18.0" ry="9.0"/><ellipse cx="769.5" cy="102" rx="10.5" ry="19.5"/><ellipse cx="769.5" cy="102" rx="18.0" ry="10.5"/><ellipse cx="769.5" cy="102" rx="12.0" ry="19.5"/><ellipse cx="769.5" cy="102" rx="18.0" ry="12.0"/><ellipse cx="769.5" cy="102" rx="13.5" ry="19.5"/><ellipse cx="769.5" cy="102" rx="18.0" ry="13.5"/><ellipse cx="769.5" cy="102" rx="15.0" ry="19.5"/><ellipse cx="769.5" cy="102" rx="18.0" ry="15.0"/><ellipse cx="769.5" cy="102" rx="16.5" ry="19.5"/><ellipse cx="769.5" cy="102" rx="18.0" ry="16.5"/><ellipse cx="769.5" cy="102" rx="18.0" ry="19.5"/><ellipse cx="769.5" cy="102" rx="18.0" ry="18.0"/></g><path d="M766.5 89.2c5.5-1.2 11.5 1.4 13.3 7c1.2 4 0.4 8.6-1.4 11.6c-0.6 2.4 0.8 5.2 2.4 7.2c-3.4 2.4-8.8 4.6-12.6 6l-2.8-4.8c-1.6 0.5-3.4 0.4-4.6-0.5c-1-1-0.7-2.6-0.9-3.8c-0.4-1.1-1-1.6-0.8-2.6c-0.9-0.5-2-1.2-1.8-2c0.3-1.2 1.6-2.6 1.7-4c-0.3-2-0.2-4.2 0.5-6c1.2-3.8 3.8-7 7-8.1z" fill="none" stroke="#e09a36" stroke-width="0.7"/><path d="M770.8 99.5c1.6-0.6 2.8 0.6 2.6 2.4c-0.2 1.8-1.2 3.4-2.4 3.6c-1-0.6-1.2-4.6-0.2-6z" fill="#eaa43c" opacity="0.8"/><path d="M757.5 99.5c1.5 0.5 3 0.6 4.2 0.2M758 110.5c1.5 0.2 2.6 1 3.2 2.2" stroke="#f0b050" stroke-width="0.7" fill="none"/><clipPath id="ht"><path d="M764.4 145C766 144.6 767.5 145.4 768.6 146.2C772.5 145.6 777 147.6 779.6 151C780.8 152.6 782 153.6 782.5 154.6C781.8 155.4 781.2 155.8 781.2 156.6C782.2 160 781.6 164 779.6 166.6C777.4 169.4 773.4 170.6 770 169.6C767.6 168.8 766 167.4 765 165.6C764 165.4 763 164.8 762.6 163.8C763 163 763.2 162.2 762.8 161.4C761.4 157.6 761 152.6 762.8 149C763.4 147.4 764 146 764.4 145Z"/></clipPath><path d="M764.4 145C766 144.6 767.5 145.4 768.6 146.2C772.5 145.6 777 147.6 779.6 151C780.8 152.6 782 153.6 782.5 154.6C781.8 155.4 781.2 155.8 781.2 156.6C782.2 160 781.6 164 779.6 166.6C777.4 169.4 773.4 170.6 770 169.6C767.6 168.8 766 167.4 765 165.6C764 165.4 763 164.8 762.6 163.8C763 163 763.2 162.2 762.8 161.4C761.4 157.6 761 152.6 762.8 149C763.4 147.4 764 146 764.4 145Z" fill="#543a18"/><g clip-path="url(#ht)" fill="none" stroke="#d8902e" stroke-width="0.48" transform="rotate(20 771.8 157.5)"><ellipse cx="771.8" cy="157.5" rx="1.5" ry="18.0"/><ellipse cx="771.8" cy="157.5" rx="15.0" ry="1.5"/><ellipse cx="771.8" cy="157.5" rx="3.0" ry="18.0"/><ellipse cx="771.8" cy="157.5" rx="15.0" ry="3.0"/><ellipse cx="771.8" cy="157.5" rx="4.5" ry="18.0"/><ellipse cx="771.8" cy="157.5" rx="15.0" ry="4.5"/><ellipse cx="771.8" cy="157.5" rx="6.0" ry="18.0"/><ellipse cx="771.8" cy="157.5" rx="15.0" ry="6.0"/><ellipse cx="771.8" cy="157.5" rx="7.5" ry="18.0"/><ellipse cx="771.8" cy="157.5" rx="15.0" ry="7.5"/><ellipse cx="771.8" cy="157.5" rx="9.0" ry="18.0"/><ellipse cx="771.8" cy="157.5" rx="15.0" ry="9.0"/><ellipse cx="771.8" cy="157.5" rx="10.5" ry="18.0"/><ellipse cx="771.8" cy="157.5" rx="15.0" ry="10.5"/><ellipse cx="771.8" cy="157.5" rx="12.0" ry="18.0"/><ellipse cx="771.8" cy="157.5" rx="15.0" ry="12.0"/><ellipse cx="771.8" cy="157.5" rx="13.5" ry="18.0"/><ellipse cx="771.8" cy="157.5" rx="15.0" ry="13.5"/><ellipse cx="771.8" cy="157.5" rx="15.0" ry="18.0"/><ellipse cx="771.8" cy="157.5" rx="15.0" ry="15.0"/></g><path d="M764.4 145C766 144.6 767.5 145.4 768.6 146.2C772.5 145.6 777 147.6 779.6 151C780.8 152.6 782 153.6 782.5 154.6C781.8 155.4 781.2 155.8 781.2 156.6C782.2 160 781.6 164 779.6 166.6C777.4 169.4 773.4 170.6 770 169.6C767.6 168.8 766 167.4 765 165.6C764 165.4 763 164.8 762.6 163.8C763 163 763.2 162.2 762.8 161.4C761.4 157.6 761 152.6 762.8 149C763.4 147.4 764 146 764.4 145Z" fill="none" stroke="#e09a36" stroke-width="0.7"/><ellipse cx="771.8" cy="158.4" rx="5" ry="6.3" fill="#4e3616" stroke="#f0a838" stroke-width="0.7" transform="rotate(20 772.4 158.4)"/><path d="M767.6 155.5l7.6 -2.9M767 158.5l9.4-3.6M767.4 161.5l9.4-3.6M768.9 164l7.3-2.8" stroke="#e39a34" stroke-width="0.55"/><clipPath id="hf"><path d="M779 197.8C783.6 197.6 787 201 787.3 205.8C787.6 209.4 787 213 786 216.4C785.2 219.2 784.8 222.6 784 226L778 229.8C774 228 770 226 766.2 224C767.6 222 769 220 769.6 218C768 216.4 767 214 766.8 211.6C766.6 206 770 198.4 779 197.8Z"/></clipPath><path d="M779 197.8C783.6 197.6 787 201 787.3 205.8C787.6 209.4 787 213 786 216.4C785.2 219.2 784.8 222.6 784 226L778 229.8C774 228 770 226 766.2 224C767.6 222 769 220 769.6 218C768 216.4 767 214 766.8 211.6C766.6 206 770 198.4 779 197.8Z" fill="#543a18"/><g clip-path="url(#hf)" fill="none" stroke="#d8902e" stroke-width="0.48" transform="rotate(8 777 211)"><ellipse cx="777" cy="211" rx="1.5" ry="22.5"/><ellipse cx="777" cy="211" rx="16.5" ry="1.5"/><ellipse cx="777" cy="211" rx="3.0" ry="22.5"/><ellipse cx="777" cy="211" rx="16.5" ry="3.0"/><ellipse cx="777" cy="211" rx="4.5" ry="22.5"/><ellipse cx="777" cy="211" rx="16.5" ry="4.5"/><ellipse cx="777" cy="211" rx="6.0" ry="22.5"/><ellipse cx="777" cy="211" rx="16.5" ry="6.0"/><ellipse cx="777" cy="211" rx="7.5" ry="22.5"/><ellipse cx="777" cy="211" rx="16.5" ry="7.5"/><ellipse cx="777" cy="211" rx="9.0" ry="22.5"/><ellipse cx="777" cy="211" rx="16.5" ry="9.0"/><ellipse cx="777" cy="211" rx="10.5" ry="22.5"/><ellipse cx="777" cy="211" rx="16.5" ry="10.5"/><ellipse cx="777" cy="211" rx="12.0" ry="22.5"/><ellipse cx="777" cy="211" rx="16.5" ry="12.0"/><ellipse cx="777" cy="211" rx="13.5" ry="22.5"/><ellipse cx="777" cy="211" rx="16.5" ry="13.5"/><ellipse cx="777" cy="211" rx="15.0" ry="22.5"/><ellipse cx="777" cy="211" rx="16.5" ry="15.0"/><ellipse cx="777" cy="211" rx="16.5" ry="22.5"/><ellipse cx="777" cy="211" rx="16.5" ry="16.5"/></g><path d="M779 197.8C783.6 197.6 787 201 787.3 205.8C787.6 209.4 787 213 786 216.4C785.2 219.2 784.8 222.6 784 226L778 229.8C774 228 770 226 766.2 224C767.6 222 769 220 769.6 218C768 216.4 767 214 766.8 211.6C766.6 206 770 198.4 779 197.8Z" fill="none" stroke="#e09a36" stroke-width="0.7"/></svg>
<div class="ph" style="left:724.0px;top:239.8px;width:74.6px;height:7px;font-size:5.5px;line-height:7px;background:#767676;padding-left:4px">6DOF</div>
<div style="left:724.0px;top:246.8px;width:74.6px;height:58.6px;background:rgba(46,46,46,0.86)"></div>
<svg width="800" height="433"><g stroke="#6c6c6c" stroke-width="0.7" fill="none"><path d="M724.0 255.3H798.6"/><path d="M724.0 263.5H798.6"/><path d="M724.0 272.0H798.6"/><path d="M724.0 280.6H798.6"/><path d="M724.0 288.8H798.6"/><path d="M724.0 297.0H798.6"/><path d="M724.0 305.4H798.6"/><path d="M724.0 246.8V305.4"/><path d="M742.4 246.8V305.4"/><path d="M763.9 246.8V305.4"/><path d="M784.5 246.8V305.4"/><path d="M798.6 246.8V305.4"/></g></svg>
<svg width="800" height="433"><path d="M746.8 239.8L744.9 305.4" stroke="#c4c4c4" stroke-width="1"/><text x="751.6" y="295.2" font-size="9.6" fill="#5c5c5c" font-family="Liberation Sans, sans-serif">10</text></svg>
<div class="tl" style="left:746.6px;top:248.3px;font-size:5.2px;line-height:6.4px">Raw</div>
<div class="tl" style="left:767.0px;top:248.3px;font-size:5.2px;line-height:6.4px">Game</div>
<div class="tl" style="left:725.8px;top:256.8px;font-size:5.2px;line-height:6.4px">Yaw</div>
<div class="td" style="left:745.4px;top:256.8px;font-size:5.2px;line-height:6.4px">11.0</div>
<div class="td" style="left:766.1px;top:256.8px;font-size:5.2px;line-height:6.4px">29.3</div>
<div class="tl" style="left:786.7px;top:256.8px;font-size:5.2px;line-height:6.4px">deg</div>
<div class="tl" style="left:725.8px;top:265.0px;font-size:5.2px;line-height:6.4px">Pitch</div>
<div class="td" style="left:745.4px;top:265.0px;font-size:5.2px;line-height:6.4px">-4.4</div>
<div class="td" style="left:766.1px;top:265.0px;font-size:5.2px;line-height:6.4px">3.0</div>
<div class="tl" style="left:786.7px;top:265.0px;font-size:5.2px;line-height:6.4px">deg</div>
<div class="tl" style="left:725.8px;top:273.5px;font-size:5.2px;line-height:6.4px">Roll</div>
<div class="td" style="left:745.4px;top:273.5px;font-size:5.2px;line-height:6.4px">7.2</div>
<div class="td" style="left:766.1px;top:273.5px;font-size:5.2px;line-height:6.4px">0.1</div>
<div class="tl" style="left:786.7px;top:273.5px;font-size:5.2px;line-height:6.4px">deg</div>
<div class="tl" style="left:725.8px;top:282.1px;font-size:5.2px;line-height:6.4px">X</div>
<div class="td" style="left:745.4px;top:282.1px;font-size:5.2px;line-height:6.4px">-2.5</div>
<div class="td" style="left:766.1px;top:282.1px;font-size:5.2px;line-height:6.4px">2.0</div>
<div class="tl" style="left:786.7px;top:282.1px;font-size:5.2px;line-height:6.4px">cm</div>
<div class="tl" style="left:725.8px;top:290.3px;font-size:5.2px;line-height:6.4px">Y</div>
<div class="td" style="left:745.4px;top:290.3px;font-size:5.2px;line-height:6.4px">0.1</div>
<div class="td" style="left:766.1px;top:290.3px;font-size:5.2px;line-height:6.4px">0.0</div>
<div class="tl" style="left:786.7px;top:290.3px;font-size:5.2px;line-height:6.4px">cm</div>
<div class="tl" style="left:725.8px;top:298.5px;font-size:5.2px;line-height:6.4px">Z</div>
<div class="td" style="left:745.4px;top:298.5px;font-size:5.2px;line-height:6.4px">-3.94</div>
<div class="td" style="left:766.1px;top:298.5px;font-size:5.2px;line-height:6.4px">-4.89</div>
<div class="tl" style="left:786.7px;top:298.5px;font-size:5.2px;line-height:6.4px">cm</div>


<!-- ================= STATUS BAR ================= -->
<div style="left:0;top:427px;width:800px;height:6px;background:linear-gradient(#3f4550,#353a44)"></div>
<div style="left:0;top:427px;width:800px;height:6px;overflow:hidden;font-size:4.8px;line-height:6px;color:#d8d8d8">
<span style="left:659.6px;top:2.8px">Center: F12</span>
<span style="left:691px;top:2.8px">Precision: F7</span>
<span style="left:725px;top:2.8px">Pause: F9</span>
<span style="left:753px;top:2.8px">Status:</span>
<span style="left:687px;top:0.5px;width:0.8px;height:6px;background:#667"></span>
<span style="left:721.4px;top:0.5px;width:0.8px;height:6px;background:#667"></span>
<span style="left:749px;top:0.5px;width:0.8px;height:6px;background:#667"></span>
<span style="left:771.8px;top:1.6px;width:5.4px;height:5.4px;border-radius:3px;background:radial-gradient(circle at 40% 30%,#aef0a0,#2ea82a 60%,#1a7a18)"></span>
<span style="left:780px;top:1.6px;width:5.4px;height:5.4px;border-radius:3px;background:radial-gradient(circle at 40% 30%,#ffe0a0,#f0a020 60%,#c07810)"></span>
<span style="left:788.6px;top:1.6px;width:5.4px;height:5.4px;border-radius:3px;background:radial-gradient(circle at 40% 30%,#b0e0ff,#2a90e0 60%,#1668b0)"></span>
<span style="left:796.6px;top:0;width:3.4px;height:6px;background:#b8bcc2"></span>
</div>

<!-- window frame left -->
<div style="left:0;top:1px;width:4.4px;height:432px;background:linear-gradient(90deg,#8c8f94 0,#8c8f94 1.1px,#b4d0ef 1.4px,#a5c6ee 3.8px,#3a3f48 4.4px)"></div>
<div style="left:0;top:0;width:2px;height:2px;background:#111"></div>
<div style="left:0;top:267px;width:1.3px;height:166px;background:linear-gradient(#6a6c70,#1a1a1c 6px,#0c0c0e)"></div>

<!-- app orb + quick access -->
<svg width="800" height="433">
<defs><radialGradient id="orb" cx="45%" cy="35%"><stop offset="0" stop-color="#f4f4f4"/><stop offset="0.7" stop-color="#d2d2d2"/><stop offset="1" stop-color="#aaa"/></radialGradient></defs>
<circle cx="13.6" cy="10.6" r="7" fill="url(#orb)" stroke="#e8e8e8" stroke-width="0.6"/>
<path d="M13.4 4.5v6l-4.6 3.4M13.4 10.5l5.6 2.2" stroke="#b4b4b4" stroke-width="0.9" fill="none"/>
<path d="M28 4.5l1.5 1.5 1.6-1.2-1 2.2 1 1.6" stroke="#c8ccd2" stroke-width="0.9" fill="none"/>
<circle cx="40" cy="6.6" r="3.1" fill="url(#bl)" stroke="#dce8f6" stroke-width="0.5"/>
<path d="M39 5.6q1-1.2 2 0q0.2 0.8-1 1.4v0.6" stroke="#fff" stroke-width="0.8" fill="none"/>
<path d="M46.6 6.6h1.4l-0.7 0.9z" fill="#6a7a90"/>
</svg>
</div></body></html>
